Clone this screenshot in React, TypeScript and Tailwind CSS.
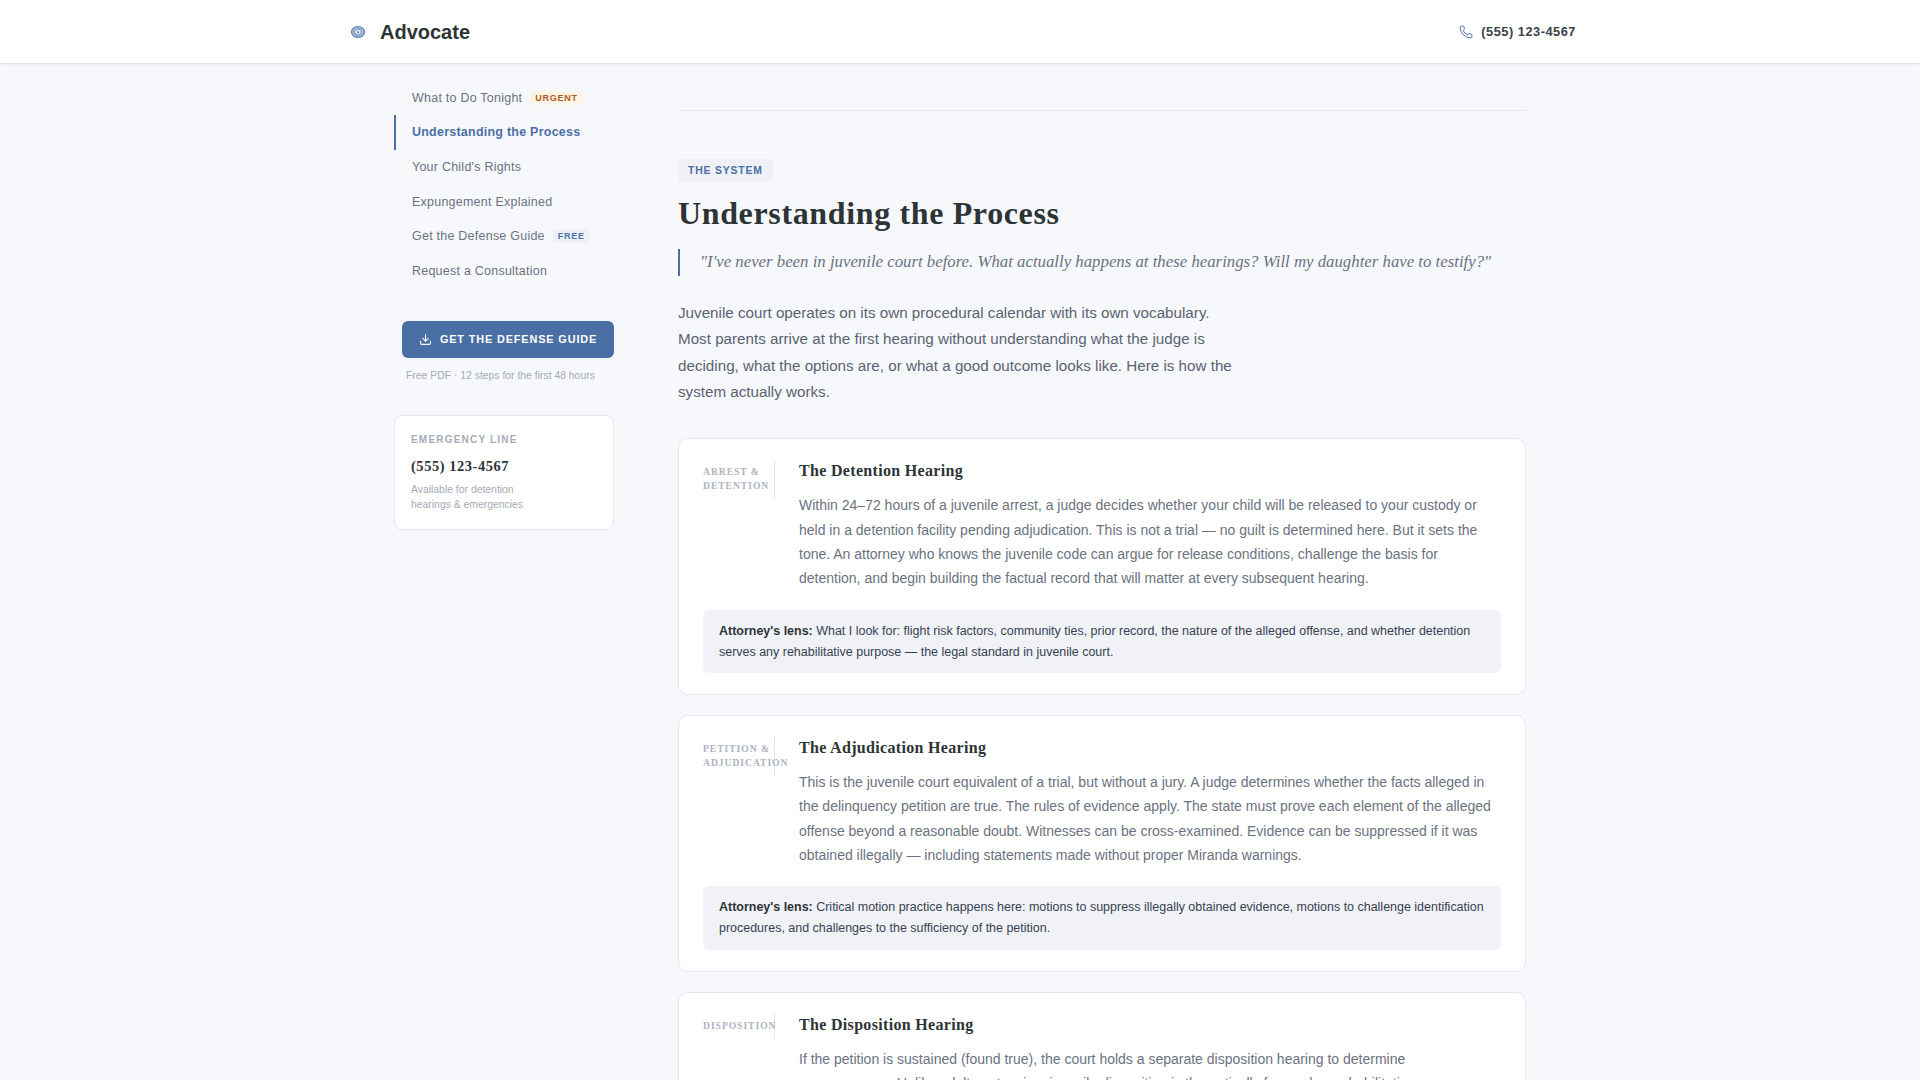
import React from "react";
import { Phone, Download } from "lucide-react";

const sans = "font-['Liberation_Sans',Arial,sans-serif]";
const serif = "font-['Liberation_Serif','Times_New_Roman',serif]";

function Hearing({ label, title, body, lens }: { label: React.ReactNode; title: string; body: string; lens?: React.ReactNode }) {
  return (
    <section className="bg-white border border-[#e4e7ee] rounded-[10px] px-6 pt-[20px] pb-[21px]">
      <div className="flex">
        <div className="w-[72px] shrink-0 self-start border-r border-[#e4e7ee] py-[6px]">
          <div className={`${serif} whitespace-nowrap text-[9.6px] leading-[14px] font-bold tracking-[0.96px] uppercase text-[#adb3be]`}>{label}</div>
        </div>
        <div className="ml-6 flex-1 min-w-0">
          <h3 className={`${serif} pt-[2px] text-[16px] leading-[20px] font-bold tracking-[0.32px] text-[#2d3436] mb-[12px]`}>{title}</h3>
          <p className="text-[14px] leading-[24.3px] text-[#6b7280]">{body}</p>
        </div>
      </div>
      {lens && (
        <div className="mt-[19px] bg-[#f1f2f7] rounded-[6px] px-4 pt-[11px] pb-[10.5px] text-[12.48px] leading-[21px] text-[#374151]">
          <strong className="font-bold text-[#2d3436]">Attorney's lens:</strong> {lens}
        </div>
      )}
    </section>
  );
}

export default function App() {
  return (
    <div className={`${sans} h-screen overflow-hidden bg-[#f7f8fc]`}>
      <header className="h-[64px] bg-white border-b border-[#e4e7ee] shadow-[0_1px_3px_rgba(0,0,0,0.04)]">
        <div className="mx-auto max-w-[1280px] h-full px-6 flex items-center justify-between">
          <div className="flex items-center pl-[6px]">
            <svg width="16" height="16" viewBox="0 0 16 16" className="mr-[14px]">
              <ellipse cx="8" cy="8" rx="6.5" ry="5.3" fill="#a9c0dc" stroke="#5f82b3" strokeWidth="1.3" />
              <ellipse cx="8" cy="8" rx="3.6" ry="3.1" fill="#dfe8f3" stroke="#5f82b3" strokeWidth="0.9" />
              <circle cx="8" cy="8.3" r="1" fill="#5f82b3" />
            </svg>
            <span className="text-[20px] leading-[28px] font-bold text-[#2d3436]">Advocate</span>
          </div>
          <div className="flex items-center gap-2">
            <Phone size={14} strokeWidth={1.7} className="text-[#4a6fa5]" />
            <span className="text-[12.8px] font-bold tracking-[0.51px] text-[#3b4048]">(555) 123-4567</span>
          </div>
        </div>
      </header>

      <div className="mx-auto w-[1132px] flex gap-16">
        <aside className="w-[220px] shrink-0 pt-[16.7px]">
          <nav className="flex flex-col">
            <a className="h-[34.7px] pl-[18px] flex items-center text-[12.48px] tracking-[0.25px] text-[#6b7280]">
              What to Do Tonight
              <span className="-mt-px ml-2 px-[5px] py-[1px] rounded-[3px] bg-[#fdf3e7] text-[9px] leading-[12px] font-bold tracking-[0.72px] text-[#b45a1c]">URGENT</span>
            </a>
            <a className="h-[34.7px] pl-[16px] flex items-center border-l-2 border-[#4a6fa5] text-[12.48px] font-bold tracking-[0.25px] text-[#4a6fa5]">
              Understanding the Process
            </a>
            <a className="h-[34.7px] pl-[18px] flex items-center text-[12.48px] tracking-[0.25px] text-[#6b7280]">Your Child's Rights</a>
            <a className="h-[34.7px] pl-[18px] flex items-center text-[12.48px] tracking-[0.25px] text-[#6b7280]">Expungement Explained</a>
            <a className="h-[34.7px] pl-[18px] flex items-center text-[12.48px] tracking-[0.25px] text-[#6b7280]">
              Get the Defense Guide
              <span className="-mt-px ml-2 px-[5px] py-[1px] rounded-[3px] bg-[#eef2f8] text-[9px] leading-[12px] font-bold tracking-[0.72px] text-[#4a6fa5]">FREE</span>
            </a>
            <a className="h-[34.7px] pl-[18px] flex items-center text-[12.48px] tracking-[0.25px] text-[#6b7280]">Request a Consultation</a>
          </nav>

          <div className="ml-2 mt-[31.8px]">
            <button className="w-[212px] h-[37px] rounded-[6px] bg-[#4a6fa5] flex items-center justify-center gap-[8px] text-[10.88px] font-bold tracking-[0.87px] text-white">
              <Download size={13} strokeWidth={2} />
              GET THE DEFENSE GUIDE
            </button>
            <p className="mt-[10px] pl-1 text-[10.4px] leading-[16px] text-[#a5abb7]">Free PDF · 12 steps for the first 48 hours</p>
          </div>

          <div className="mt-[31px] bg-white border border-[#e4e7ee] rounded-[8px] px-4 pt-[17px] pb-[16.5px]">
            <div className="text-[10px] leading-[14px] font-bold tracking-[1.2px] text-[#a5abb7]">EMERGENCY LINE</div>
            <div className={`${serif} mt-[9px] text-[14.4px] leading-[20px] font-bold tracking-[0.58px] text-[#2d3436]`}>(555) 123-4567</div>
            <div className="mt-[6.5px] text-[10.4px] leading-[15px] text-[#a5abb7]">Available for detention<br />hearings &amp; emergencies</div>
          </div>
        </aside>

        <main className="w-[848px] shrink-0 pt-[46px]">
          <div className="border-t border-[#e4e7ee]" />
          <span className="inline-block mt-[48px] px-[10px] py-[5px] rounded-[3px] bg-[#eff1f6] text-[10.4px] leading-[13px] font-bold tracking-[0.83px] text-[#4a6fa5]">THE SYSTEM</span>
          <h1 className={`${serif} mt-[10.5px] text-[32px] leading-[41px] font-bold tracking-[0.64px] text-[#2d3436]`}>Understanding the Process</h1>
          <blockquote className={`${serif} mt-[15.5px] border-l-2 border-[#4a6fa5] pl-5 h-[27px] text-[16.8px] leading-[26px] italic text-[#6b7280]`}>
            "I've never been in juvenile court before. What actually happens at these hearings? Will my daughter have to testify?"
          </blockquote>
          <p className="mt-[24px] max-w-[560px] text-[15.2px] leading-[26.4px] text-[#5b6370]">
            Juvenile court operates on its own procedural calendar with its own vocabulary. Most parents arrive at the first hearing without understanding what the judge is deciding, what the options are, or what a good outcome looks like. Here is how the system actually works.
          </p>
          <div className="mt-[32.8px] flex flex-col gap-[20px]">
            <Hearing
              label={<>Arrest &amp;<br />Detention</>}
              title="The Detention Hearing"
              body="Within 24–72 hours of a juvenile arrest, a judge decides whether your child will be released to your custody or held in a detention facility pending adjudication. This is not a trial — no guilt is determined here. But it sets the tone. An attorney who knows the juvenile code can argue for release conditions, challenge the basis for detention, and begin building the factual record that will matter at every subsequent hearing."
              lens="What I look for: flight risk factors, community ties, prior record, the nature of the alleged offense, and whether detention serves any rehabilitative purpose — the legal standard in juvenile court."
            />
            <Hearing
              label={<>Petition &amp;<br />Adjudication</>}
              title="The Adjudication Hearing"
              body="This is the juvenile court equivalent of a trial, but without a jury. A judge determines whether the facts alleged in the delinquency petition are true. The rules of evidence apply. The state must prove each element of the alleged offense beyond a reasonable doubt. Witnesses can be cross-examined. Evidence can be suppressed if it was obtained illegally — including statements made without proper Miranda warnings."
              lens="Critical motion practice happens here: motions to suppress illegally obtained evidence, motions to challenge identification procedures, and challenges to the sufficiency of the petition."
            />
            <Hearing
              label="Disposition"
              title="The Disposition Hearing"
              body="If the petition is sustained (found true), the court holds a separate disposition hearing to determine consequences. Unlike adult sentencing, juvenile disposition is theoretically focused on rehabilitation."
            />
          </div>
        </main>
      </div>
    </div>
  );
}
